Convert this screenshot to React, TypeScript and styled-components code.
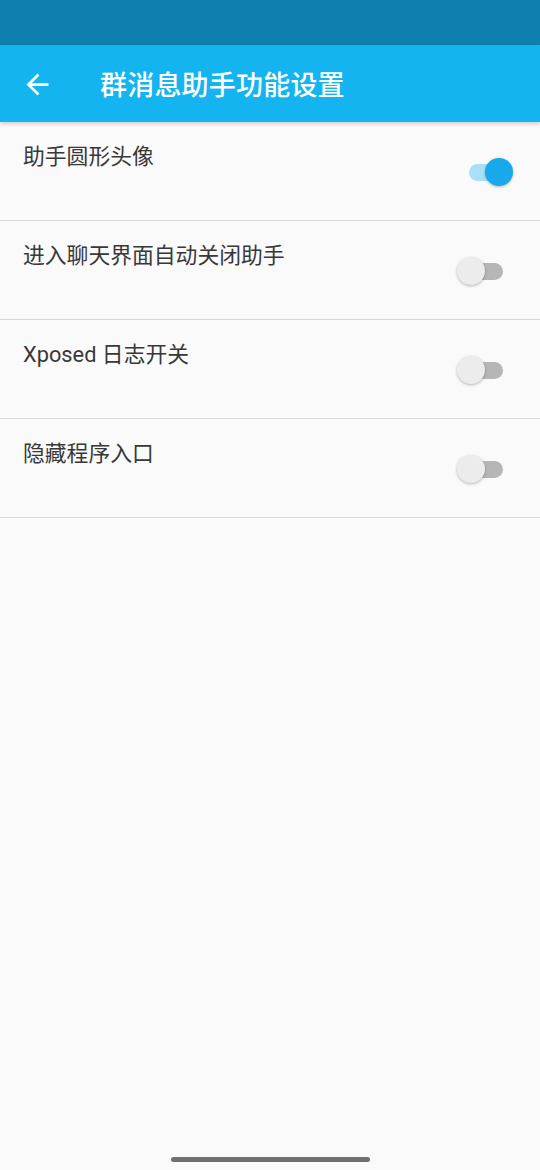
import { useState } from 'react'
import styled, { createGlobalStyle } from 'styled-components'

const GlobalStyle = createGlobalStyle`
  html, body {
    margin: 0;
    padding: 0;
    background: #fafafa;
  }
  body {
    font-family: Roboto, "Noto Sans CJK SC", "Noto Sans", sans-serif;
  }
`

const settings = [
  { label: '助手圆形头像', on: true },
  { label: '进入聊天界面自动关闭助手', on: false },
  { label: 'Xposed 日志开关', on: false },
  { label: '隐藏程序入口', on: false },
]

function App() {
  const [values, setValues] = useState(settings.map(s => s.on))

  const toggle = (i: number) => {
    setValues(v => v.map((x, j) => (j === i ? !x : x)))
  }

  return (
    <Screen>
      <GlobalStyle />
      <StatusBar />
      <AppBar>
        <BackButton>
          <svg viewBox="0 0 24 24">
            <path d="M20 11H7.83l5.59-5.59L12 4l-8 8 8 8 1.41-1.41L7.83 13H20v-2z" fill="#fff" />
          </svg>
        </BackButton>
        <Title>群消息助手功能设置</Title>
      </AppBar>

      <List>
        {settings.map((s, i) => (
          <Row key={s.label} onClick={() => toggle(i)}>
            <Label>{s.label}</Label>
            <Switch>
              <Track $on={values[i]} />
              <Thumb $on={values[i]} />
            </Switch>
          </Row>
        ))}
      </List>

      <Spacer />
      <NavBar>
        <Handle />
      </NavBar>
    </Screen>
  )
}

export default App

const Screen = styled.div`
  width: 540px;
  height: 1170px;
  display: flex;
  flex-direction: column;
  background: #fafafa;
  overflow: hidden;
`
const StatusBar = styled.div`
  height: 45px;
  background-color: #0f7fad;
`
const AppBar = styled.div`
  height: 77px;
  background-color: #14b4f0;
  display: flex;
  align-items: center;
  box-shadow: 0 2px 4px rgba(0, 0, 0, 0.18);
  position: relative;
  z-index: 1;
`
const BackButton = styled.div`
  width: 33px;
  height: 33px;
  margin-left: 21px;
  margin-top: 1px;

  > svg {
    display: block;
    width: 33px;
    height: 33px;
  }
`
const Title = styled.h1`
  margin: 0 0 0 46px;
  color: #ffffff;
  font-size: 27px;
  font-weight: 500;
  letter-spacing: 0.2px;
`
const List = styled.div`
  display: flex;
  flex-direction: column;
`
const Row = styled.div`
  height: 98px;
  display: flex;
  align-items: center;
  justify-content: space-between;
  padding: 0 27px 0 23px;
  border-bottom: 1px solid #d8d8d8;
  cursor: pointer;
`
const Label = styled.div`
  align-self: flex-start;
  margin-top: 23px;
  font-size: 21.8px;
  font-weight: 400;
  color: #383838;
  line-height: 24px;
`
const Switch = styled.div`
  width: 56px;
  height: 30px;
  position: relative;
  margin-top: 2px;
  display: flex;
  align-items: center;
`
const Track = styled.div<{ $on: boolean }>`
  position: absolute;
  left: 12px;
  width: 34px;
  height: 17px;
  border-radius: 9px;
  background: ${p => (p.$on ? '#a8e0f8' : '#b6b6b6')};
`
const Thumb = styled.div<{ $on: boolean }>`
  position: absolute;
  left: ${p => (p.$on ? '28px' : '0px')};
  width: 28px;
  height: 28px;
  border-radius: 50%;
  background: ${p => (p.$on ? '#17a9ea' : '#ececec')};
  box-shadow: 0 1px 3px rgba(0, 0, 0, 0.28);
`
const Spacer = styled.div`
  flex: 1;
`
const NavBar = styled.div`
  height: 13px;
  display: flex;
  justify-content: center;
`
const Handle = styled.div`
  width: 199px;
  height: 5px;
  border-radius: 3px;
  background: #707070;
`
